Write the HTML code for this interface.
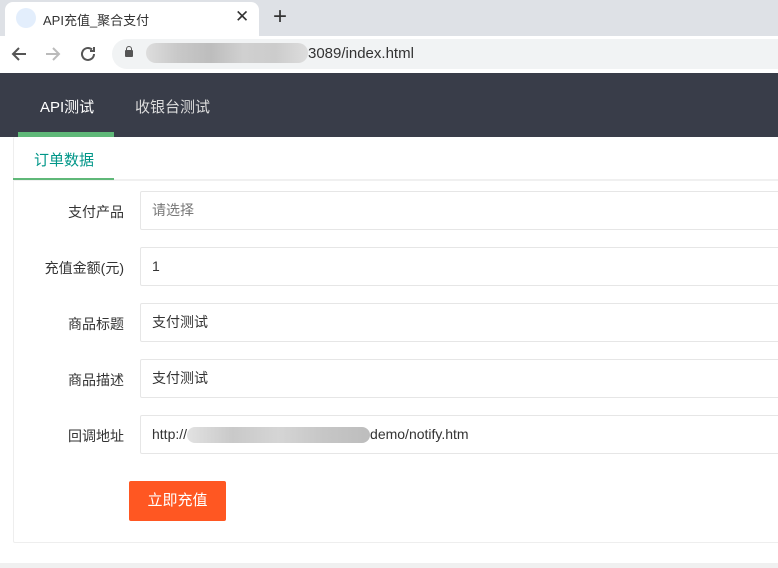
<!DOCTYPE html>
<html><head><meta charset="utf-8"><style>
*{margin:0;padding:0;box-sizing:border-box}
body{width:778px;height:568px;overflow:hidden;background:#fff;font-family:"Liberation Sans","Noto Sans CJK SC",sans-serif;position:relative}
.abs{position:absolute}
.lbl{position:absolute;right:654px;font-size:14px;color:#333;width:120px;text-align:right}
.inp{position:absolute;left:140px;width:640px;height:39px;border:1px solid #e6e6e6;border-radius:2px;font-size:14px;color:#333;padding-left:11px;line-height:37px}
</style></head><body>
<div class="abs" style="left:0;top:0;width:778px;height:36px;background:#dee1e6"></div>
<div class="abs" style="left:5px;top:2px;width:254px;height:34px;background:#fff;border-radius:8px 8px 0 0"></div>
<div class="abs" style="left:16px;top:8px;width:20px;height:20px;border-radius:50%;background:#e3eefc"></div>
<div class="abs" style="left:43px;top:10px;font-size:13px;color:#333">API充值_聚合支付</div>
<div class="abs" style="left:235px;top:7px;font-size:17px;color:#333">✕</div>
<div class="abs" style="left:273px;top:3px;font-size:24px;color:#333">+</div>
<div class="abs" style="left:0;top:36px;width:778px;height:37px;background:#fff"></div>
<svg class="abs" style="left:10px;top:44px" width="90" height="20" viewBox="0 0 90 20" fill="none" stroke-width="2">
<path d="M16 10H4M9 4L3 10l6 6" stroke="#555"/>
<path d="M36 10h12M43 4l6 6-6 6" stroke="#bbb"/>
<path d="M84 10a6 6 0 1 1-2-4.5M84 3v4h-4" stroke="#555"/>
</svg>
<div class="abs" style="left:112px;top:39px;width:680px;height:30px;border-radius:15px;background:#f1f3f4"></div>
<div class="abs" style="left:125px;top:50px;width:8px;height:7px;background:#555;border-radius:1px"></div>
<div class="abs" style="left:126px;top:46px;width:6px;height:6px;border:1.5px solid #555;border-radius:3px 3px 0 0"></div>
<div class="abs" style="left:146px;top:43px;width:162px;height:20px;border-radius:10px;background:linear-gradient(90deg,#ddd,#c8c8c8,#bdbdbd,#d0d0d0,#ccc,#ddd)"></div>
<div class="abs" style="left:308px;top:45px;font-size:15px;color:#333">3089/index.html</div>
<div class="abs" style="left:0;top:73px;width:778px;height:64px;background:#393d49"></div>
<div class="abs" style="left:40px;top:96px;font-size:15px;color:#fff">API测试</div>
<div class="abs" style="left:135px;top:96px;font-size:15px;color:#ddd">收银台测试</div>
<div class="abs" style="left:18px;top:132px;width:96px;height:5px;background:#5fb878"></div>
<div class="abs" style="left:13px;top:137px;width:770px;height:406px;border:1px solid #eee;border-top:none;border-radius:2px"></div>
<div class="abs" style="left:13px;top:179px;width:770px;height:2px;background:#f0f0f0"></div>
<div class="abs" style="left:13px;top:178px;width:101px;height:2px;background:#5fb878"></div>
<div class="abs" style="left:34px;top:149px;font-size:15px;color:#009688">订单数据</div>
<div class="lbl" style="top:202px">支付产品</div>
<div class="inp" style="top:191px;color:#777">请选择</div>
<div class="lbl" style="top:258px">充值金额(元)</div>
<div class="inp" style="top:247px">1</div>
<div class="lbl" style="top:314px">商品标题</div>
<div class="inp" style="top:303px">支付测试</div>
<div class="lbl" style="top:370px">商品描述</div>
<div class="inp" style="top:359px">支付测试</div>
<div class="lbl" style="top:426px">回调地址</div>
<div class="inp" style="top:415px">http://<span style="display:inline-block;width:183px;height:16px;vertical-align:middle;background:linear-gradient(90deg,#e2e2e2,#c9c9c9,#d5d5d5,#c6c6c6,#bdbdbd);border-radius:8px"></span>demo/notify.htm</div>
<div class="abs" style="left:129px;top:481px;width:97px;height:40px;background:#ff5722;border-radius:2px;color:#fff;font-size:15px;text-align:center;line-height:40px">立即充值</div>
<div class="abs" style="left:0;top:563px;width:778px;height:5px;background:#f0f0f0"></div>
</body></html>
